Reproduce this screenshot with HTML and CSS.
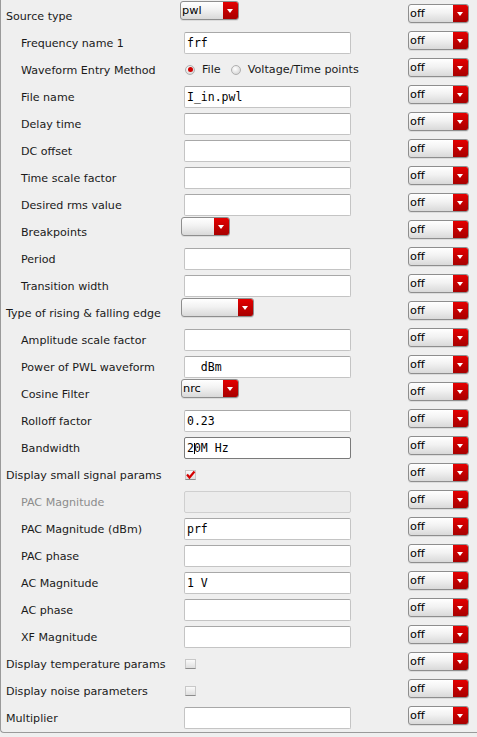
FILE: index.html
```html
<!DOCTYPE html>
<html>
<head>
<meta charset="utf-8">
<link rel="stylesheet" href="styles.css">
</head>
<body>
<div class="panel">
  <div class="row"><span class="label">Source type</span><div class="ctl"><div class="select src"><span class="sv">pwl</span><span class="arrow"></span></div></div><div class="select off"><span class="sv">off</span><span class="arrow"></span></div></div>
  <div class="row"><span class="label sub">Frequency name 1</span><div class="ctl"><div class="field">frf</div></div><div class="select off"><span class="sv">off</span><span class="arrow"></span></div></div>
  <div class="row"><span class="label sub">Waveform Entry Method</span><div class="ctl"><div class="radios"><span class="radio on"></span><span class="rtext">File</span><span class="radio"></span><span class="rtext">Voltage/Time points</span></div></div><div class="select off"><span class="sv">off</span><span class="arrow"></span></div></div>
  <div class="row"><span class="label sub">File name</span><div class="ctl"><div class="field">I_in.pwl</div></div><div class="select off"><span class="sv">off</span><span class="arrow"></span></div></div>
  <div class="row"><span class="label sub">Delay time</span><div class="ctl"><div class="field"></div></div><div class="select off"><span class="sv">off</span><span class="arrow"></span></div></div>
  <div class="row"><span class="label sub">DC offset</span><div class="ctl"><div class="field"></div></div><div class="select off"><span class="sv">off</span><span class="arrow"></span></div></div>
  <div class="row"><span class="label sub">Time scale factor</span><div class="ctl"><div class="field"></div></div><div class="select off"><span class="sv">off</span><span class="arrow"></span></div></div>
  <div class="row"><span class="label sub">Desired rms value</span><div class="ctl"><div class="field"></div></div><div class="select off"><span class="sv">off</span><span class="arrow"></span></div></div>
  <div class="row"><span class="label sub">Breakpoints</span><div class="ctl"><div class="select bp"><span class="sv"></span><span class="arrow"></span></div></div><div class="select off"><span class="sv">off</span><span class="arrow"></span></div></div>
  <div class="row"><span class="label sub">Period</span><div class="ctl"><div class="field"></div></div><div class="select off"><span class="sv">off</span><span class="arrow"></span></div></div>
  <div class="row"><span class="label sub">Transition width</span><div class="ctl"><div class="field"></div></div><div class="select off"><span class="sv">off</span><span class="arrow"></span></div></div>
  <div class="row"><span class="label">Type of rising &amp; falling edge</span><div class="ctl"><div class="select edge"><span class="sv"></span><span class="arrow"></span></div></div><div class="select off"><span class="sv">off</span><span class="arrow"></span></div></div>
  <div class="row"><span class="label sub">Amplitude scale factor</span><div class="ctl"><div class="field"></div></div><div class="select off"><span class="sv">off</span><span class="arrow"></span></div></div>
  <div class="row"><span class="label sub">Power of PWL waveform</span><div class="ctl"><div class="field">  dBm</div></div><div class="select off"><span class="sv">off</span><span class="arrow"></span></div></div>
  <div class="row"><span class="label sub">Cosine Filter</span><div class="ctl"><div class="select cos"><span class="sv">nrc</span><span class="arrow"></span></div></div><div class="select off"><span class="sv">off</span><span class="arrow"></span></div></div>
  <div class="row"><span class="label sub">Rolloff factor</span><div class="ctl"><div class="field">0.23</div></div><div class="select off"><span class="sv">off</span><span class="arrow"></span></div></div>
  <div class="row"><span class="label sub">Bandwidth</span><div class="ctl"><div class="field focus">2<span class="caret"></span>0M Hz</div></div><div class="select off"><span class="sv">off</span><span class="arrow"></span></div></div>
  <div class="row"><span class="label">Display small signal params</span><div class="ctl"><span class="check"><svg width="11" height="10" viewBox="0 0 11 10"><path d="M2 4.5 L4.5 7.5 L9.5 1.5" fill="none" stroke="#d40000" stroke-width="2.2"/></svg></span></div><div class="select off"><span class="sv">off</span><span class="arrow"></span></div></div>
  <div class="row"><span class="label sub dis">PAC Magnitude</span><div class="ctl"><div class="field disabled"></div></div><div class="select off"><span class="sv">off</span><span class="arrow"></span></div></div>
  <div class="row"><span class="label sub">PAC Magnitude (dBm)</span><div class="ctl"><div class="field">prf</div></div><div class="select off"><span class="sv">off</span><span class="arrow"></span></div></div>
  <div class="row"><span class="label sub">PAC phase</span><div class="ctl"><div class="field"></div></div><div class="select off"><span class="sv">off</span><span class="arrow"></span></div></div>
  <div class="row"><span class="label sub">AC Magnitude</span><div class="ctl"><div class="field">1 V</div></div><div class="select off"><span class="sv">off</span><span class="arrow"></span></div></div>
  <div class="row"><span class="label sub">AC phase</span><div class="ctl"><div class="field"></div></div><div class="select off"><span class="sv">off</span><span class="arrow"></span></div></div>
  <div class="row"><span class="label sub">XF Magnitude</span><div class="ctl"><div class="field"></div></div><div class="select off"><span class="sv">off</span><span class="arrow"></span></div></div>
  <div class="row"><span class="label">Display temperature params</span><div class="ctl"><span class="check"></span></div><div class="select off"><span class="sv">off</span><span class="arrow"></span></div></div>
  <div class="row"><span class="label">Display noise parameters</span><div class="ctl"><span class="check"></span></div><div class="select off"><span class="sv">off</span><span class="arrow"></span></div></div>
  <div class="row"><span class="label">Multiplier</span><div class="ctl"><div class="field"></div></div><div class="select off"><span class="sv">off</span><span class="arrow"></span></div></div>
</div>
</body>
</html>
```
FILE: styles.css
```css
html, body {
  margin: 0;
  padding: 0;
  background: #efefef;
}
body {
  font-family: "DejaVu Sans", "Noto Sans", sans-serif;
  font-size: 11px;
  color: #1a1a1a;
  overflow: hidden;
}
.panel {
  width: 476px;
  height: 729px;
  padding-top: 3px;
  border-left: 1px solid #9a9a9a;
  border-bottom: 1px solid #9a9a9a;
  border-bottom-left-radius: 4px;
  box-sizing: content-box;
}
.row {
  display: grid;
  grid-template-columns: 179px 228px 61px;
  height: 27px;
  align-items: center;
}
.label {
  padding-left: 5px;
  white-space: nowrap;
  line-height: 14px;
  font-size: 11.1px;
  padding-top: 1px;
}
.label.sub { padding-left: 20px; }
.label.dis { color: #8c8c8c; }
.ctl {
  align-self: stretch;
  position: relative;
  display: flex;
  align-items: center;
}
.field {
  align-self: flex-start;
  margin-top: 2px;
  margin-left: 4px;
  width: 167px;
  height: 22px;
  box-sizing: border-box;
  background: #fff;
  border: 1px solid #c4c4c4;
  border-top-color: #a8a8a8;
  border-radius: 2px;
  font-family: "DejaVu Sans Mono", "Liberation Mono", monospace;
  font-size: 11.5px;
  line-height: 21px;
  padding-left: 2px;
  white-space: pre;
  color: #000;
}
.field.focus {
  border-color: #7a7a7a;
}
.field.disabled {
  background: #ececec;
  border-color: #cfcfcf;
}
.caret {
  display: inline-block;
  width: 1px;
  height: 11px;
  background: #000;
  margin-right: -1px;
  vertical-align: -2px;
}
.select {
  display: flex;
  height: 19px;
  box-sizing: border-box;
  border: 1px solid #8e8e8e;
  border-radius: 3px;
  overflow: hidden;
  background: linear-gradient(#ffffff, #f2f2f2 45%, #d9d9d9);
  box-shadow: 0 1px 0 rgba(0,0,0,0.08);
}
.select .sv {
  flex: 1;
  padding-left: 1px;
  line-height: 17px;
  font-size: 11.3px;
  color: #000;
}
.select .arrow {
  width: 15px;
  position: relative;
  background: linear-gradient(#e40000, #c40000 50%, #a80000);
}
.select .arrow::after {
  content: "";
  position: absolute;
  left: 4px;
  top: 7px;
  border-left: 3.5px solid transparent;
  border-right: 3.5px solid transparent;
  border-top: 4px solid #fff;
}
.select.off {
  align-self: start;
  margin-top: 1px;
  height: 19px;
  width: 61px;
}
.ctl .select {
  align-self: flex-start;
  margin-top: -2px;
}
.select.src { width: 59px; margin-left: 0; }
.select.bp { width: 49px; margin-left: 1px; }
.select.edge { width: 73px; margin-left: 1px; }
.select.cos { width: 58px; margin-left: 1px; }
.radios {
  display: flex;
  align-items: center;
  margin-left: 5px;
  margin-top: -2px;
  font-size: 11.2px;
}
.radio {
  width: 10px;
  height: 10px;
  box-sizing: border-box;
  border-radius: 50%;
  border: 1px solid #b0b0b0;
  background: radial-gradient(circle at 40% 35%, #ffffff, #dcdcdc 70%, #c8c8c8);
  position: relative;
}
.radio.on::after {
  content: "";
  position: absolute;
  left: 1.5px;
  top: 1.5px;
  width: 5px;
  height: 5px;
  border-radius: 50%;
  background: #d00000;
}
.rtext {
  margin-left: 7px;
  margin-right: 10px;
}
.check {
  margin-left: 5px;
  margin-top: -2px;
  width: 11px;
  height: 10px;
  box-sizing: border-box;
  border: 1px solid #c8c8c8;
  border-bottom-color: #8c8c8c;
  background: linear-gradient(#fafafa, #dedede);
  position: relative;
}
.check svg {
  position: absolute;
  left: -1px;
  top: -1px;
}
```
